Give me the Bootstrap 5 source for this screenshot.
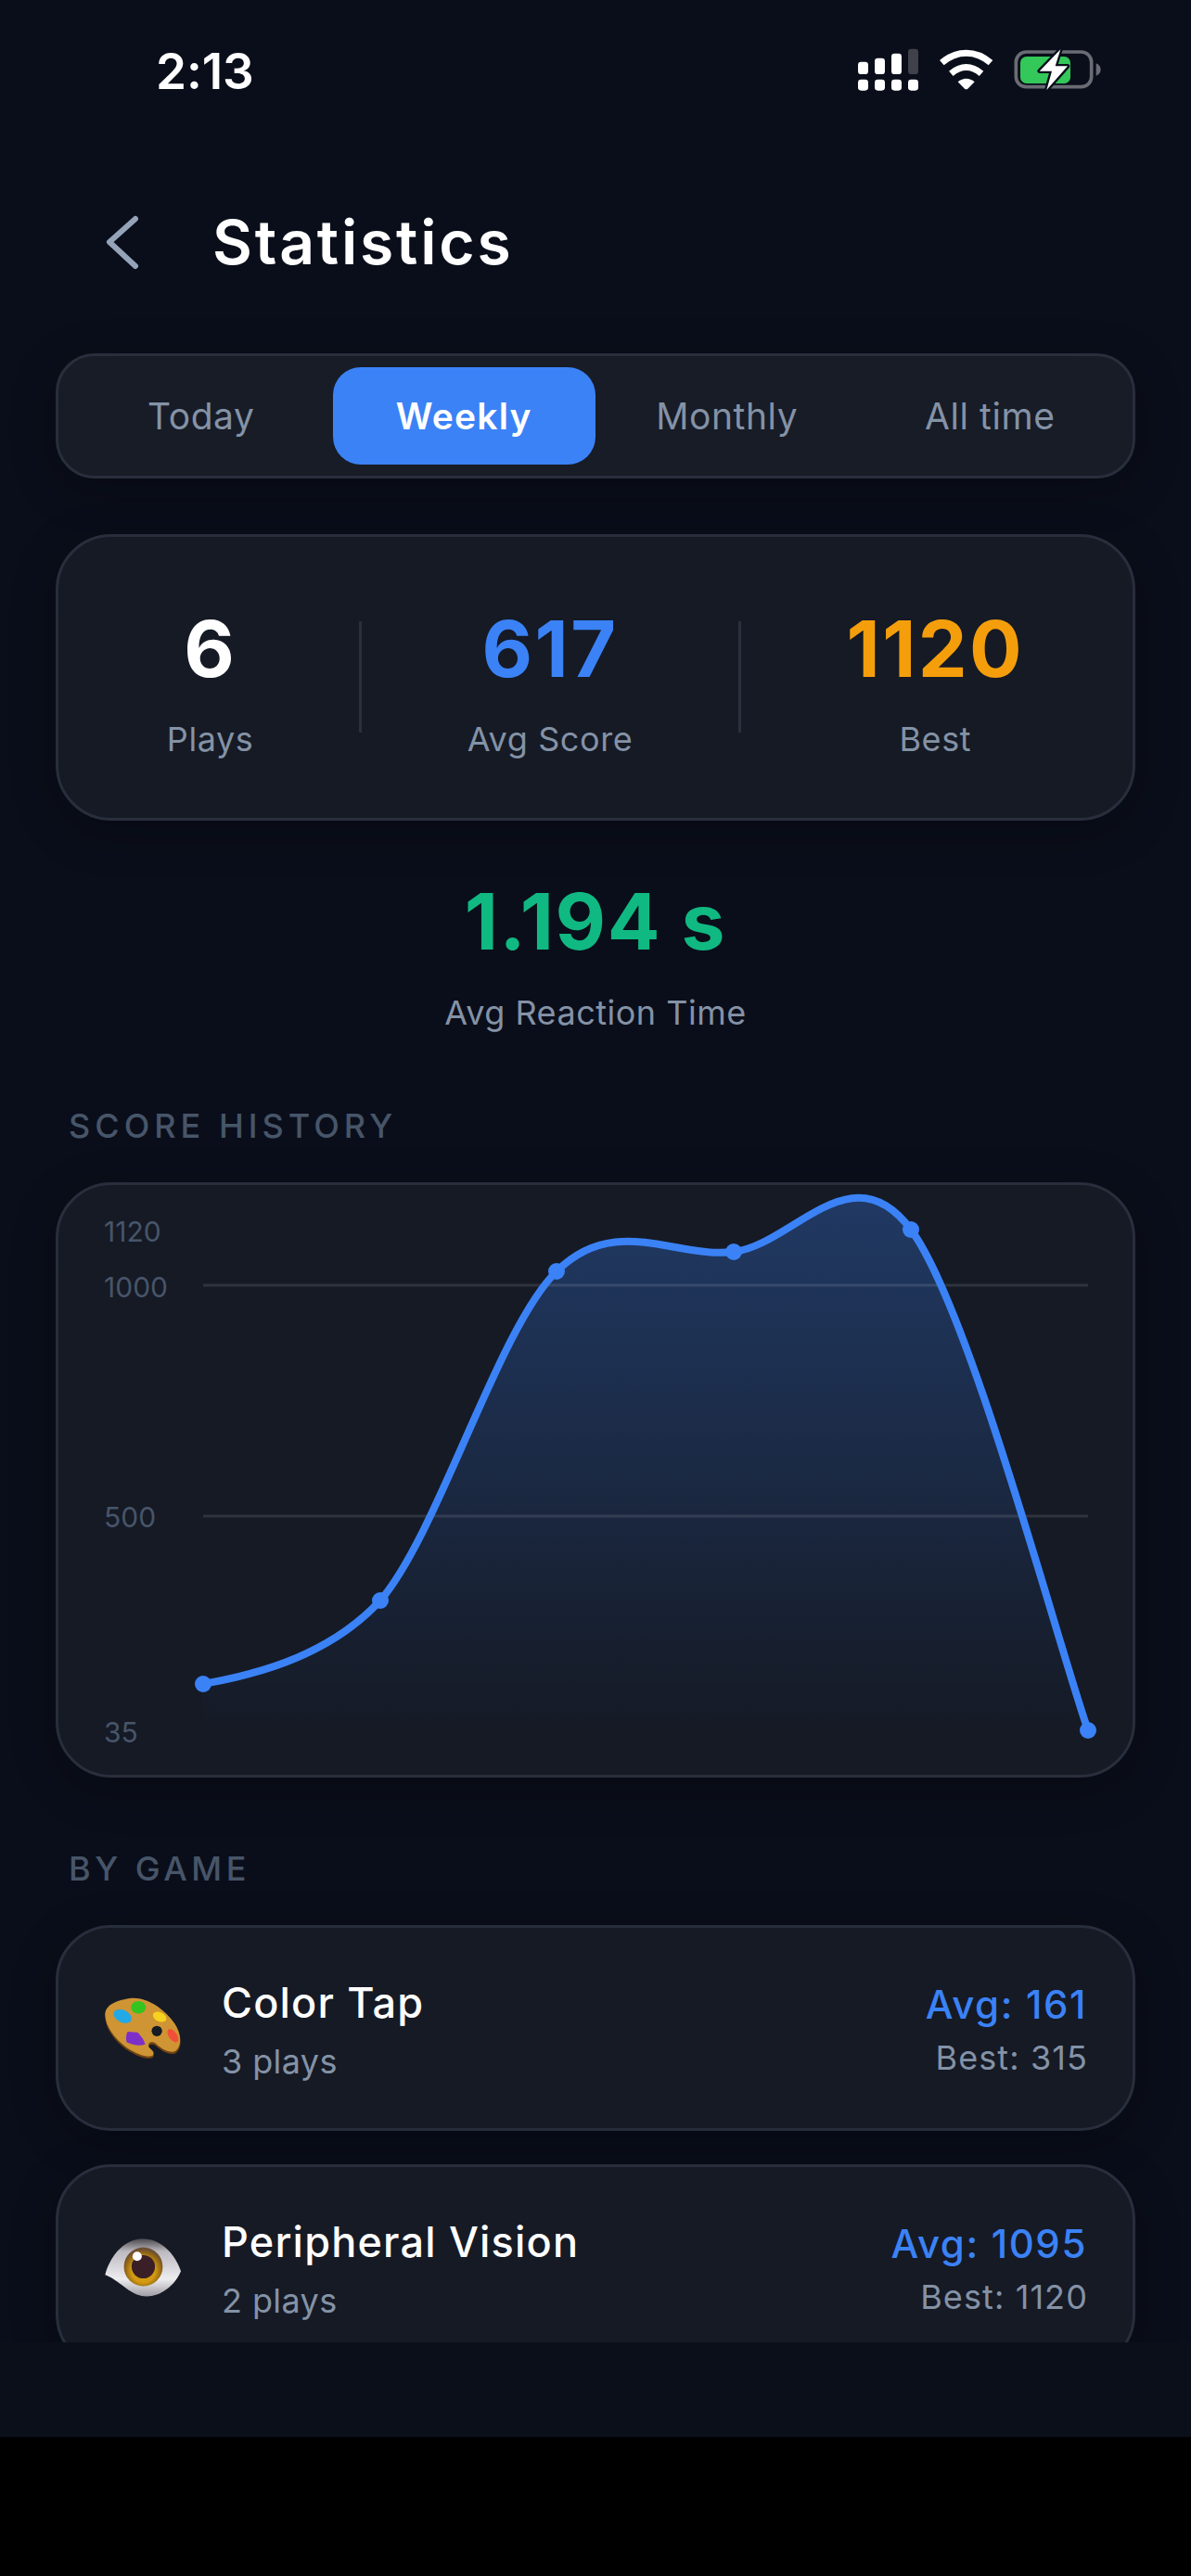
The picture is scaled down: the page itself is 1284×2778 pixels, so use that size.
<!DOCTYPE html>
<html lang="en">
<head>
<meta charset="utf-8">
<title>Statistics</title>
<link href="https://cdn.jsdelivr.net/npm/bootstrap@5.3.0/dist/css/bootstrap.min.css" rel="stylesheet">
<style>
html,body{background:#000;margin:0;}
body{font-family:"Inter","Liberation Sans",sans-serif;width:1284px;height:2778px;overflow:hidden;}
.app-frame{height:2628px;background:#0b0f1a;}
.app-view{height:2526px;overflow:hidden;background:#0a0e1a;}
.status-row{height:150px;padding:0 84px 0 168px;}
.status-row svg{margin-bottom:10px;}
.clock{font-size:53px;font-weight:600;color:#fff;line-height:1;letter-spacing:-.1px;margin-top:4px;}
.head-row{margin-top:71px;height:80px;padding-left:105px;margin-bottom:80px;}
.head-row svg{width:60px;height:80px;margin-right:64px;}
.page-title{font-size:66px;font-weight:600;color:#fff;line-height:80px;letter-spacing:2.8px;margin:0;}
.body-col{padding:0 60px;}
.panel{background:#151a25;border:3px solid #292e3c;box-shadow:0 12px 48px rgba(0,0,0,.25);}
.tab-bar{height:135px;border-radius:42px;padding:12px;margin-bottom:60px;background:#171c27;}
.tab-item{flex:1 1 0;border-radius:30px;font-size:39px;color:#8492a6;letter-spacing:.6px;line-height:1;}
.tab-item.on{background:#3b82f6;color:#fff;font-weight:600;letter-spacing:1.2px;}
.stat-panel{height:309px;border-radius:60px;padding:71px 60px 61px;}
.stat-cell{text-align:center;}
.stat-num{font-size:84px;font-weight:700;line-height:100px;color:#fff;letter-spacing:2.4px;}
.stat-cap{font-size:36px;color:#8492a6;line-height:44px;margin-top:25px;letter-spacing:.6px;}
.stat-sep{width:3px;height:120px;background:#2a303d;margin-top:20px;}
.tone-blue{color:#3b82f6;}
.tone-amber{color:#f59e0b;}
.tone-green{color:#10b981;}
.react-num{font-size:84px;font-weight:700;line-height:100px;margin-top:59px;text-align:center;letter-spacing:1.6px;}
.react-cap{font-size:36px;color:#8492a6;line-height:50px;margin-top:23px;text-align:center;letter-spacing:.5px;}
.sect-label{font-size:36px;font-weight:500;color:#475569;line-height:44px;letter-spacing:5px;padding-left:14px;}
.sect-one{margin-top:75px;margin-bottom:39px;}
.sect-two{margin-top:76px;margin-bottom:39px;letter-spacing:4.5px;}
.chart-panel{height:642px;border-radius:60px;overflow:hidden;}
.chart-panel svg{display:block;width:1158px;height:636px;}
.axis-text{font-family:"Inter","Liberation Sans",sans-serif;font-size:30px;fill:#475569;}
.game-list{gap:36px;}
.game-row{height:222px;flex:none;border-radius:60px;padding:0 49px 0 47px;}
.game-icon{width:88px;height:70px;margin-right:41px;flex:none;}
.game-name{font-size:45px;font-weight:500;color:#fff;line-height:54px;letter-spacing:1.2px;}
.game-sub{font-size:36px;color:#8492a6;line-height:48px;margin-top:12px;letter-spacing:.4px;}
.game-text{padding-top:6px;}
.game-score{text-align:right;padding-top:4px;}
.game-avg{font-size:42px;font-weight:500;line-height:50px;letter-spacing:1.6px;}
.game-best{font-size:36px;color:#8492a6;line-height:44px;margin-top:10px;letter-spacing:1.1px;margin-right:-1px;}
</style>
</head>
<body>
<div class="app-frame">
<main class="app-view">
  <div class="status-row d-flex align-items-center justify-content-between">
    <span class="clock">2:13</span>
    <svg width="320" height="80" viewBox="0 0 960 240" aria-hidden="true">
      <g fill="#fff">
        <rect x="135" y="110" width="33" height="40" rx="10"/><rect x="189" y="98" width="33" height="52" rx="10"/><rect x="243" y="83" width="33" height="67" rx="10"/>
        <rect x="135" y="167" width="33" height="36" rx="10"/><rect x="189" y="167" width="33" height="36" rx="10"/><rect x="243" y="167" width="33" height="36" rx="10"/><rect x="297" y="167" width="33" height="36" rx="10"/>
      </g>
      <rect x="297" y="68" width="33" height="82" rx="10" fill="#3f414b"/>
      <g fill="none" stroke="#fff" stroke-width="21">
        <path d="M406 113C454 71 516 71 564 113"/>
        <path d="M436 148C468 121 502 121 534 148"/>
      </g>
      <path d="M458 175C474 161 496 161 512 175L490 197C487 199 483 199 480 197Z" fill="#fff"/>
      <rect x="646" y="78" width="244" height="113" rx="33" fill="none" stroke="#6a6c74" stroke-width="11"/>
      <path d="M905 115C915 119 920 126 920 135C920 144 915 151 905 155Z" fill="#6a6c74"/>
      <rect x="660" y="93" width="162" height="87" rx="20" fill="#34c759"/>
      <path d="M790 70L722 140H762L745 201L813 124H773Z" fill="#fff" stroke="#0a0e1a" stroke-width="14" stroke-linejoin="round" paint-order="stroke"/>
    </svg>
  </div>

  <header class="head-row d-flex align-items-center">
    <svg viewBox="105 221 60 80" aria-hidden="true"><path d="M146 236L118 261L146 287" fill="none" stroke="#94a3b8" stroke-width="6" stroke-linecap="round" stroke-linejoin="round"/></svg>
    <h1 class="page-title">Statistics</h1>
  </header>

  <div class="body-col">
    <nav class="panel tab-bar d-flex">
      <div class="tab-item d-flex align-items-center justify-content-center">Today</div>
      <div class="tab-item on d-flex align-items-center justify-content-center">Weekly</div>
      <div class="tab-item d-flex align-items-center justify-content-center">Monthly</div>
      <div class="tab-item d-flex align-items-center justify-content-center">All time</div>
    </nav>

    <section class="panel stat-panel d-flex justify-content-around align-items-start">
      <div class="stat-cell"><div class="stat-num">6</div><div class="stat-cap">Plays</div></div>
      <div class="stat-sep"></div>
      <div class="stat-cell"><div class="stat-num tone-blue">617</div><div class="stat-cap">Avg Score</div></div>
      <div class="stat-sep"></div>
      <div class="stat-cell"><div class="stat-num tone-amber">1120</div><div class="stat-cap">Best</div></div>
    </section>

    <div class="react-num tone-green">1.194 s</div>
    <div class="react-cap">Avg Reaction Time</div>

    <div class="sect-label sect-one">SCORE HISTORY</div>
    <section class="panel chart-panel">
      <svg viewBox="63 1278 1158 636" role="img" aria-label="Score history chart">
        <defs>
          <linearGradient id="areaFade" gradientUnits="userSpaceOnUse" x1="0" y1="1288" x2="0" y2="1866">
            <stop offset="0" stop-color="#3b82f6" stop-opacity=".3"/>
            <stop offset="1" stop-color="#3b82f6" stop-opacity="0"/>
          </linearGradient>
        </defs>
        <path d="M219 1816C250.8 1810 346.5 1795 410 1726C473.5 1651.8 536.5 1433.7 600 1371C663.5 1308.3 727.3 1357.7 791 1350C854.7 1342.3 918.3 1240 982 1326C1045.7 1411.8 1141.2 1776 1173 1866L1173 1866L219 1866Z" fill="url(#areaFade)"/>
        <line x1="219" y1="1386" x2="1173" y2="1386" stroke="#fff" stroke-opacity=".11" stroke-width="3"/>
        <line x1="219" y1="1635" x2="1173" y2="1635" stroke="#fff" stroke-opacity=".11" stroke-width="3"/>
        <text class="axis-text" x="112" y="1339">1120</text>
        <text class="axis-text" x="112" y="1399">1000</text>
        <text class="axis-text" x="112" y="1647">500</text>
        <text class="axis-text" x="112" y="1879">35</text>
        <path d="M219 1816C250.8 1810 346.5 1795 410 1726C473.5 1651.8 536.5 1433.7 600 1371C663.5 1308.3 727.3 1357.7 791 1350C854.7 1342.3 918.3 1240 982 1326C1045.7 1411.8 1141.2 1776 1173 1866" fill="none" stroke="#3b82f6" stroke-width="8" stroke-linecap="round"/>
        <g fill="#3b82f6">
          <circle cx="219" cy="1816" r="9"/><circle cx="410" cy="1726" r="9"/><circle cx="600" cy="1371" r="9"/><circle cx="791" cy="1350" r="9"/><circle cx="982" cy="1326" r="9"/><circle cx="1173" cy="1866" r="9"/>
        </g>
      </svg>
    </section>

    <div class="sect-label sect-two">BY GAME</div>
    <div class="game-list d-flex flex-column">
      <article class="panel game-row d-flex align-items-center">
        <svg class="game-icon" viewBox="60 75 265 210" aria-hidden="true">
          <path d="M150 88C200 78 262 120 296 170C318 205 322 240 300 258C282 270 250 250 236 236C222 224 206 232 212 246C220 256 232 262 226 272C212 284 175 270 140 248C100 218 72 180 70 142C70 112 100 96 150 88Z" fill="#6e4212" transform="translate(0 3)"/>
          <path d="M150 84C200 76 262 116 296 166C318 200 320 236 300 254C282 266 250 246 236 232C222 220 206 228 212 242C220 252 232 258 226 268C212 280 175 266 140 244C100 214 72 176 70 138C70 108 100 92 150 84Z" fill="#cf9433"/>
          <circle cx="238" cy="190" r="17" fill="#151a25"/>
          <ellipse cx="178" cy="113" rx="24" ry="20" fill="#33c41f"/>
          <ellipse cx="127" cy="142" rx="31" ry="20" transform="rotate(25 127 142)" fill="#23a9e6"/>
          <ellipse cx="247" cy="144" rx="23" ry="15" transform="rotate(25 247 144)" fill="#f7d21e"/>
          <ellipse cx="290" cy="205" rx="13" ry="25" transform="rotate(-35 290 205)" fill="#f0503a"/>
          <path d="M143 192L175 194C188 206 198 222 200 233C184 240 160 236 140 226C136 214 138 202 143 192Z" fill="#7d30c8"/>
        </svg>
        <div class="game-text flex-grow-1"><div class="game-name">Color Tap</div><div class="game-sub">3 plays</div></div>
        <div class="game-score"><div class="game-avg tone-blue">Avg: 161</div><div class="game-best">Best: 315</div></div>
      </article>
      <article class="panel game-row d-flex align-items-center">
        <svg class="game-icon" viewBox="60 65 265 205" aria-hidden="true">
          <defs>
            <radialGradient id="irisFill" cx=".5" cy=".6" r=".55"><stop offset=".55" stop-color="#d59b10"/><stop offset=".85" stop-color="#8f6418"/><stop offset="1" stop-color="#6d4f32"/></radialGradient>
            <linearGradient id="lidFill" x1="0" y1="0" x2="0" y2="1"><stop offset="0" stop-color="#4a494d"/><stop offset=".22" stop-color="#bcb9c0"/><stop offset=".7" stop-color="#ededf0"/><stop offset="1" stop-color="#a09da4"/></linearGradient>
          </defs>
          <path d="M70 192C90 120 140 75 192 75C250 75 296 122 316 180C296 228 250 262 205 262C160 262 130 226 100 208C90 200 80 196 70 192Z" fill="url(#lidFill)"/>
          <circle cx="194" cy="166" r="63" fill="url(#irisFill)"/>
          <circle cx="194" cy="166" r="38" fill="#3a2026"/>
          <circle cx="174" cy="132" r="15" fill="#fff"/>
        </svg>
        <div class="game-text flex-grow-1"><div class="game-name">Peripheral Vision</div><div class="game-sub">2 plays</div></div>
        <div class="game-score"><div class="game-avg tone-blue">Avg: 1095</div><div class="game-best">Best: 1120</div></div>
      </article>
    </div>
  </div>
</main>
</div>
<script src="https://cdn.jsdelivr.net/npm/bootstrap@5.3.0/dist/js/bootstrap.bundle.min.js"></script>
</body>
</html>
